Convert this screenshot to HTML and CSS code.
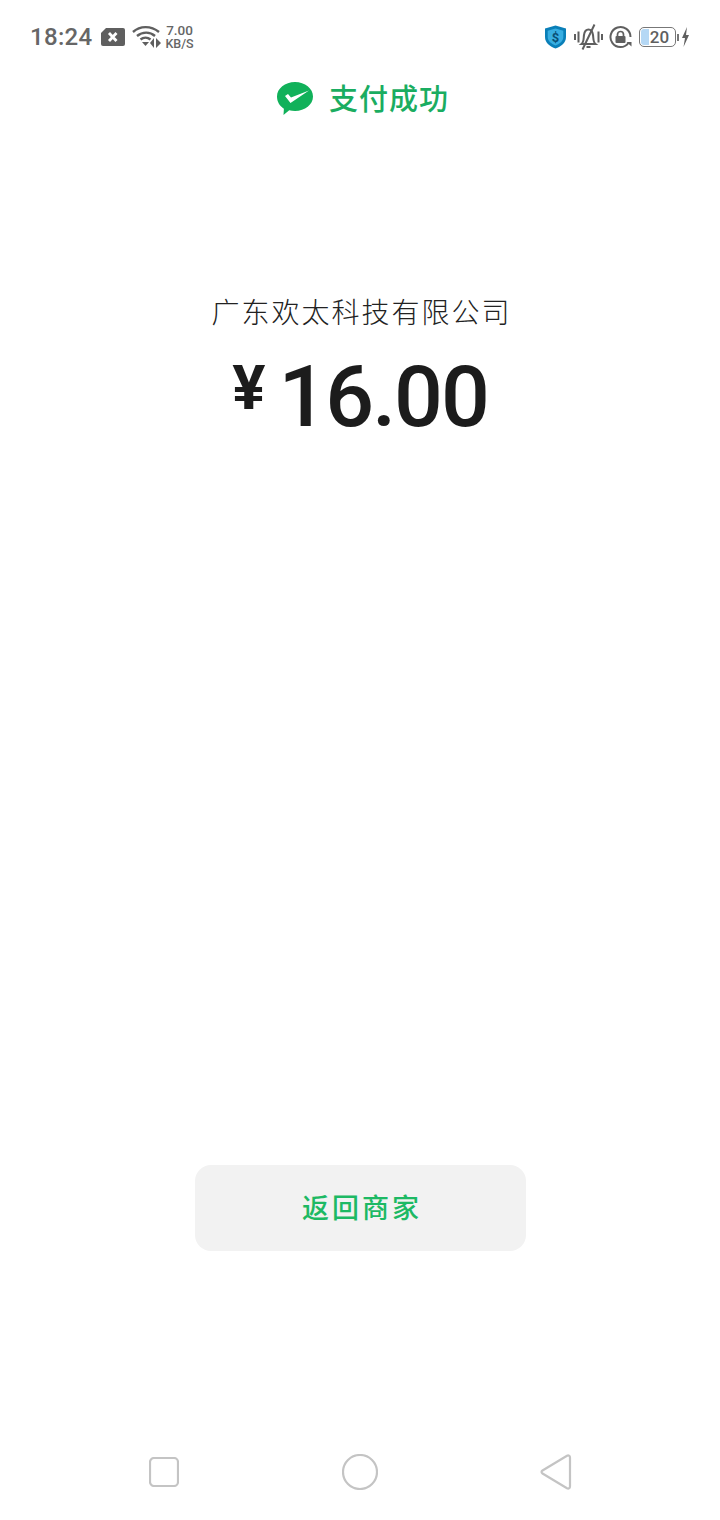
FILE: index.html
```html
<!DOCTYPE html>
<html lang="zh-CN">
  <head>
    <meta charset="UTF-8" />
    <meta name="viewport" content="width=device-width, initial-scale=1.0" />
    <title>支付成功</title>
    <link rel="stylesheet" href="styles.css">
  </head>

  <body>
    <div class="status-bar">
      <div class="status-left">
        <span class="time">18:24</span>
        <svg class="icon-sim" width="24" height="18" viewBox="0 0 24 18">
          <path d="M5 0h17a2 2 0 0 1 2 2v14a2 2 0 0 1-2 2H2a2 2 0 0 1-2-2V5z" fill="#5f5f5f"/>
          <path d="M8 5l7.500 8M15.500 5L8 13" stroke="#fff" stroke-width="2.800"/>
        </svg>
        <svg class="icon-wifi" width="29" height="24" viewBox="0 0 29 24" fill="none" stroke="#5f5f5f">
          <path d="M1 7C8 .5 19 .5 27 7" stroke-width="2.400"/>
          <path d="M5 11C10.500 6.500 18 6.500 23 11" stroke-width="2.400"/>
          <path d="M8.500 14.500c3-2.500 7-2.500 10 0" stroke-width="2.400"/>
          <path d="M10 17h7l-3.500 4z" fill="#5f5f5f" stroke="none"/>
          <path d="M22 13v10l-4-5zM24 13v10l5-5z" fill="#5f5f5f" stroke="none"/>
        </svg>
        <div class="net-speed">
          <span class="net-value">7.00</span>
          <span>KB/S</span>
        </div>
      </div>
      <div class="status-right">
        <svg width="23" height="24" viewBox="0 0 23 24">
          <path d="M11.500 .5l10.500 3v8.500c0 6-5 9.500-10.500 11.500C6 21.500 1 18 1 12V3.500z" fill="#0a7fb8"/>
          <path d="M11.500 3.500l7.800 2.200v6.300c0 4.200-3.500 6.700-7.800 8.400-4.300-1.700-7.800-4.200-7.800-8.400V5.700z" fill="#38aee2"/>
          <text x="11.500" y="17" class="shield-mark">$</text>
        </svg>
        <svg class="icon-bell" width="29" height="26" viewBox="0 0 29 26" fill="none" stroke="#5f5f5f" stroke-width="2">
          <path d="M1 10v6M4.500 7.500v11M24.500 7.500v11M28 10v6"/>
          <path d="M7.500 20c2.500-2 2-5.500 2.500-9 .5-3.500 2-5.500 4.500-5.500s4 2 4.500 5.500c.5 3.500 0 7 2.500 9z"/>
          <path d="M12.500 23h4M8.500 25.500L20.500 .5"/>
        </svg>
        <svg class="icon-lock" width="23" height="24" viewBox="0 0 23 24" fill="none" stroke="#5f5f5f" stroke-width="2">
          <path d="M19.500 18A10 10 0 1 1 21.500 12"/>
          <path d="M17.500 17h5v4.500z" fill="#5f5f5f" stroke="none"/>
          <path d="M8.500 11V9.500a3 3 0 0 1 6 0V11" stroke-width="1.700"/>
          <rect x="6.500" y="11" width="10" height="7" rx="1" fill="#5f5f5f" stroke="none"/>
        </svg>
        <div class="battery">
          <div class="battery-body">
            <span class="battery-fill"></span>
            <span class="battery-num">20</span>
          </div>
          <span class="battery-tip"></span>
        </div>
        <svg class="icon-bolt" width="9" height="20" viewBox="0 0 9 20">
          <path d="M6 0L1 11h3l-1.500 9L8 8H5z" fill="#5f5f5f"/>
        </svg>
      </div>
    </div>

    <div class="title-row">
      <svg class="icon-wechat" width="38" height="36" viewBox="0 0 38 36">
        <path d="M19 1c10 0 18 6.500 18 14.500S29 30 19 30c-2 0-4-.3-5.800-.8L7.500 34l.4-6.300C3.500 25 1 20.500 1 15.500 1 7.500 9 1 19 1z" fill="#11b15a"/>
        <path d="M9 15l5.500 7L33 9.500 15 16.500l-3-3.500z" fill="#fff"/>
      </svg>
      <h1>支付成功</h1>
    </div>

    <div class="order">
      <p class="merchant">广东欢太科技有限公司</p>
      <p class="amount"><span class="yen">¥</span>16.00</p>
    </div>

    <button class="back-btn">返回商家</button>

    <div class="nav-bar">
      <svg width="30" height="30" viewBox="0 0 30 30" fill="none">
        <rect x="1" y="1" width="28" height="28" rx="4" class="nav-stroke"/>
      </svg>
      <svg width="36" height="36" viewBox="0 0 36 36" fill="none">
        <circle cx="18" cy="18" r="17" class="nav-stroke"/>
      </svg>
      <svg width="32" height="36" viewBox="0 0 32 36" fill="none">
        <path d="M2.500 16.500L27 1.800c1.500-.8 3-.1 3 1.700v29c0 1.800-1.500 2.500-3 1.700L2.500 19.500c-1.300-.8-1.300-2.200 0-3z" class="nav-stroke"/>
      </svg>
    </div>
  </body>
</html>
```

FILE: styles.css
```css
* {
  margin: 0;
  padding: 0;
  box-sizing: border-box;
}

body {
  width: 720px;
  height: 1520px;
  background-color: #fff;
  font-family: Roboto, "Noto Sans CJK SC", sans-serif;
  display: flex;
  flex-direction: column;
  align-items: center;
}

.status-bar {
  width: 100%;
  height: 74px;
  padding: 0 30px;
  display: flex;
  justify-content: space-between;
  align-items: center;
}

.status-left,
.status-right {
  display: flex;
  align-items: center;
}

.time {
  font-size: 24px;
  font-weight: 500;
  color: #666;
  letter-spacing: 0.3px;
}

.icon-sim {
  margin-left: 9px;
}

.icon-wifi {
  margin-left: 7px;
}

.net-speed {
  margin-left: 4px;
  display: flex;
  flex-direction: column;
  font-size: 12.5px;
  font-weight: 500;
  line-height: 13px;
  color: #666;
  text-align: center;
}

.net-value {
  font-size: 13.5px;
}

.shield-mark {
  font-family: Roboto, sans-serif;
  font-size: 13px;
  font-weight: 700;
  fill: #0a4f75;
  text-anchor: middle;
}

.icon-bell {
  margin-left: 7px;
}

.icon-lock {
  margin-left: 6px;
}

.battery {
  margin-left: 7px;
  display: flex;
  align-items: center;
}

.battery-body {
  position: relative;
  width: 37px;
  height: 20px;
  border: 1px solid #777;
  border-radius: 5px;
  overflow: hidden;
  display: flex;
  align-items: center;
  justify-content: center;
}

.battery-fill {
  position: absolute;
  left: 1px;
  top: 1px;
  bottom: 1px;
  width: 8px;
  background-color: #b5d8f5;
  border-radius: 3px 0 0 3px;
}

.battery-num {
  position: relative;
  font-size: 17px;
  font-weight: 500;
  color: #5f5f5f;
  margin-left: 4px;
}

.battery-tip {
  width: 2px;
  height: 7px;
  margin-left: 1px;
  background-color: #777;
}

.icon-bolt {
  margin-left: 2px;
}

.title-row {
  margin-top: 4px;
  height: 38px;
  padding-left: 4px;
  display: flex;
  align-items: center;
  gap: 15px;
}

.icon-wechat {
  margin: 4px 0 0 1px;
}

.title-row h1 {
  font-size: 29px;
  font-weight: 500;
  color: #1aad61;
  letter-spacing: 1px;
}

.order {
  margin-top: 173px;
  text-align: center;
}

.merchant {
  font-size: 28px;
  font-weight: 300;
  line-height: 50px;
  letter-spacing: 2px;
  padding-left: 3px;
  color: #222;
}

.amount {
  margin-top: 8px;
  font-size: 86px;
  font-weight: 500;
  line-height: 100px;
  letter-spacing: -2px;
  color: #1c1c1c;
}

.yen {
  font-size: 62px;
  font-weight: 700;
  margin-right: 15px;
  vertical-align: 17px;
  line-height: 1;
}

.back-btn {
  margin-top: 718px;
  width: 331px;
  height: 86px;
  border: none;
  border-radius: 16px;
  background-color: #f2f2f2;
  color: #1db964;
  font-family: inherit;
  font-size: 27px;
  font-weight: 500;
  letter-spacing: 3px;
  padding: 0 0 3px 4px;
}

.nav-bar {
  margin-top: auto;
  margin-bottom: 30px;
  width: 100%;
  padding: 0 148px 0 149px;
  display: flex;
  justify-content: space-between;
  align-items: center;
}

.nav-stroke {
  stroke: #c4c4c4;
  stroke-width: 2.200;
}
```
